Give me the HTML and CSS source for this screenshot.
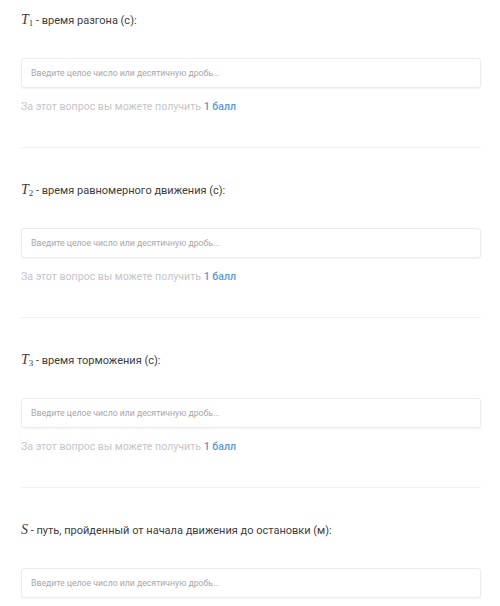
FILE: index.html
```html
<!DOCTYPE html>
<html lang="ru">
<head>
    <meta charset="UTF-8">
    <meta name="viewport" content="width=device-width, initial-scale=1.0">
    <title>Вопросы</title>
    <link rel="stylesheet" href="styles.css">
</head>
<body>

<div class="container">

    <!-- T1 -->
    <div class="question">
        <label class="qlabel" for="t1"><span class="math">T<sub>1</sub></span> - время разгона (с):</label>
        <input class="answer" type="text" id="t1" placeholder="Введите целое число или десятичную дробь...">
        <div class="points">За этот вопрос вы можете получить <span class="score">1 балл</span></div>
    </div>

    <!-- T2 -->
    <div class="question">
        <label class="qlabel" for="t2"><span class="math">T<sub>2</sub></span> - время равномерного движения (с):</label>
        <input class="answer" type="text" id="t2" placeholder="Введите целое число или десятичную дробь...">
        <div class="points">За этот вопрос вы можете получить <span class="score">1 балл</span></div>
    </div>

    <!-- T3 -->
    <div class="question">
        <label class="qlabel" for="t3"><span class="math">T<sub>3</sub></span> - время торможения (с):</label>
        <input class="answer" type="text" id="t3" placeholder="Введите целое число или десятичную дробь...">
        <div class="points">За этот вопрос вы можете получить <span class="score">1 балл</span></div>
    </div>

    <!-- S -->
    <div class="question last">
        <label class="qlabel" for="s"><span class="math">S</span> - путь, пройденный от начала движения до остановки (м):</label>
        <input class="answer" type="text" id="s" placeholder="Введите целое число или десятичную дробь...">
    </div>

</div>

</body>
</html>
```

FILE: styles.css
```css
body {
    margin: 0;
    padding: 10px 19px 0 21px;
    background: #fff;
    color: #333;
    font-family: Roboto, Arial, sans-serif;
}

.container {
    width: 460px;
}

.question {
    display: flex;
    flex-direction: column;
    padding-bottom: 32px;
    border-bottom: 1px solid #f1f1f1;
    margin-bottom: 32px;
}

.question.last {
    border-bottom: none;
}

.qlabel {
    display: block;
    height: 20px;
    line-height: 20px;
    font-size: 11px;
    color: #3d3d3d;
}

.math {
    font-family: "Liberation Serif", "Times New Roman", serif;
    font-style: italic;
    font-size: 14px;
}

.math sub {
    font-style: normal;
    font-size: 9px;
    vertical-align: -2px;
}

.answer {
    margin-top: 28px;
    height: 30px;
    width: 100%;
    box-sizing: border-box;
    padding: 0 9px;
    border: 1px solid #ececec;
    border-radius: 3px;
    box-shadow: 0 1px 2px rgba(0, 0, 0, 0.05);
    font-family: Roboto, Arial, sans-serif;
    font-size: 8.7px;
    color: #333;
    outline: none;
}

.answer::placeholder {
    color: #a8a8a8;
}

.points {
    margin-top: 11px;
    height: 16px;
    line-height: 16px;
    font-size: 10.6px;
    color: #c3c6ca;
}

.score {
    color: #5b9bd1;
    font-weight: 500;
}
```
